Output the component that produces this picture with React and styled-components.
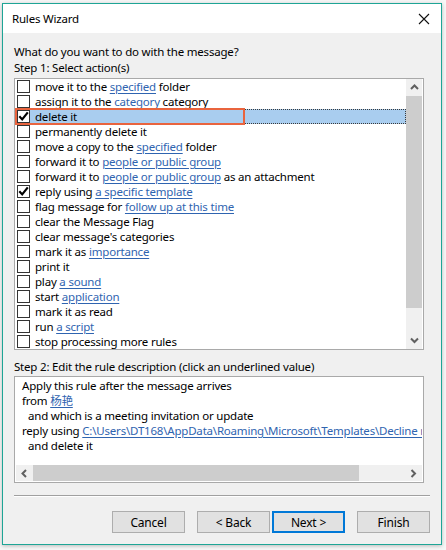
import React from 'react'
import styled, { createGlobalStyle } from 'styled-components'

const GlobalStyle = createGlobalStyle`
  html, body {
    margin: 0;
    padding: 0;
    background: #ffffff;
  }
  body {
    font-family: "Noto Sans", "Noto Sans CJK SC", sans-serif;
    font-size: 11.5px;
    letter-spacing: -0.2px;
    color: #000;
  }
`

const actions = [
  { parts: ['move it to the ', { link: 'specified' }, ' folder'] },
  { parts: ['assign it to the ', { link: 'category' }, ' category'] },
  { parts: ['delete it'], checked: true, selected: true },
  { parts: ['permanently delete it'] },
  { parts: ['move a copy to the ', { link: 'specified' }, ' folder'] },
  { parts: ['forward it to ', { link: 'people or public group' }] },
  { parts: ['forward it to ', { link: 'people or public group' }, ' as an attachment'] },
  { parts: ['reply using ', { link: 'a specific template' }], checked: true },
  { parts: ['flag message for ', { link: 'follow up at this time' }] },
  { parts: ['clear the Message Flag'] },
  { parts: ["clear message's categories"] },
  { parts: ['mark it as ', { link: 'importance' }] },
  { parts: ['print it'] },
  { parts: ['play ', { link: 'a sound' }] },
  { parts: ['start ', { link: 'application' }] },
  { parts: ['mark it as read'] },
  { parts: ['run ', { link: 'a script' }] },
  { parts: ['stop processing more rules'] },
]

const description = [
  { indent: false, parts: ['Apply this rule after the message arrives'] },
  { indent: false, parts: ['from ', { link: '杨艳' }] },
  { indent: true, parts: ['and which is a meeting invitation or update'] },
  {
    indent: false,
    parts: ['reply using ', { link: 'C:\\Users\\DT168\\AppData\\Roaming\\Microsoft\\Templates\\Decline meeting.oft' }],
  },
  { indent: true, parts: ['and delete it'] },
]

const renderParts = (parts) =>
  parts.map((p, i) => (typeof p === 'string' ? <span key={i}>{p}</span> : <Link key={i}>{p.link}</Link>))

const CheckMark = () => (
  <svg width="11" height="11" viewBox="0 0 11 11">
    <path d="M1.3 5.3 L4.2 8.4 L9.8 1.4" fill="none" stroke="#000" strokeWidth="2.2" />
  </svg>
)

const Chevron = ({ dir }) => {
  const paths = {
    up: 'M1 5 L4.5 1.5 L8 5',
    down: 'M1 1.5 L4.5 5 L8 1.5',
    left: 'M5 1 L1.5 4.5 L5 8',
    right: 'M1.5 1 L5 4.5 L1.5 8',
  }
  const vertical = dir === 'up' || dir === 'down'
  return (
    <svg width={vertical ? 9 : 7} height={vertical ? 7 : 9} viewBox={vertical ? '0 0 9 7' : '0 0 7 9'}>
      <path d={paths[dir]} fill="none" stroke="#606060" strokeWidth="2" />
    </svg>
  )
}

const App = () => (
  <>
    <GlobalStyle />
    <Page>
      <Window>
        <TitleBar>
          <Title>Rules Wizard</Title>
          <CloseIcon width="12" height="12" viewBox="0 0 12 12">
            <path d="M1 1 L11 11 M11 1 L1 11" stroke="#111" strokeWidth="1.1" />
          </CloseIcon>
        </TitleBar>
        <Body>
          <Label>What do you want to do with the message?</Label>
          <Label>Step 1: Select action(s)</Label>
          <ListBox>
            <Rows>
              {actions.map((a, i) => (
                <Row key={i} $selected={a.selected}>
                  <Checkbox>{a.checked && <CheckMark />}</Checkbox>
                  <RowText>{renderParts(a.parts)}</RowText>
                  {a.selected && <Callout />}
                </Row>
              ))}
            </Rows>
            <VScroll>
              <ArrowCell>
                <Chevron dir="up" />
              </ArrowCell>
              <VThumb />
              <VTrack />
              <ArrowCell>
                <Chevron dir="down" />
              </ArrowCell>
            </VScroll>
          </ListBox>
          <StepLabel>Step 2: Edit the rule description (click an underlined value)</StepLabel>
          <DescBox>
            <DescLines>
              {description.map((l, i) => (
                <DescLine key={i} $indent={l.indent}>
                  {renderParts(l.parts)}
                </DescLine>
              ))}
            </DescLines>
            <HScroll>
              <HArrowCell>
                <Chevron dir="left" />
              </HArrowCell>
              <HThumb />
              <HTrack />
              <HArrowCell>
                <Chevron dir="right" />
              </HArrowCell>
            </HScroll>
          </DescBox>
          <Separator />
          <Buttons>
            <Button>Cancel</Button>
            <ButtonPair>
              <Button>&lt; Back</Button>
              <Button $default>Next &gt;</Button>
            </ButtonPair>
            <Button>Finish</Button>
          </Buttons>
        </Body>
      </Window>
    </Page>
  </>
)

const Page = styled.div`
  width: 446px;
  height: 550px;
  padding: 3px 0 0 2px;
  box-sizing: border-box;
  background: #f7f7f7;
`

const Window = styled.div`
  width: 440px;
  height: 542px;
  box-sizing: border-box;
  border: 1px solid #1ea596;
  background: #f0f0f0;
  display: flex;
  flex-direction: column;
  box-shadow: 0 1px 4px rgba(0, 0, 0, 0.25);
`

const TitleBar = styled.div`
  height: 29px;
  flex-shrink: 0;
  background: #ffffff;
  display: flex;
  align-items: center;
  justify-content: space-between;
  padding: 0 11px 0 9px;
`

const Title = styled.div`
  font-size: 11.5px;
  color: #000;
`

const CloseIcon = styled.svg`
  display: block;
`

const Body = styled.div`
  flex: 1;
  display: flex;
  flex-direction: column;
  padding: 11px 11px 0 11px;
`

const Label = styled.div`
  height: 16px;
  line-height: 16px;
  white-space: nowrap;
`

const StepLabel = styled(Label)`
  margin-top: 9px;
`

const ListBox = styled.div`
  margin-top: 2px;
  width: 410px;
  height: 272px;
  box-sizing: border-box;
  border: 1px solid #a9a9a9;
  background: #fff;
  display: flex;
  padding: 0 1px 0 0;
`

const Rows = styled.div`
  flex: 1;
  display: flex;
  flex-direction: column;
  min-width: 0;
`

const Row = styled.div`
  position: relative;
  height: 15px;
  display: flex;
  align-items: center;
  padding-left: 2px;
  background: ${(p) => (p.$selected ? '#a9cdef' : 'transparent')};
  outline: ${(p) => (p.$selected ? '1px dotted #3a3a3a' : 'none')};
  outline-offset: -1px;
  white-space: nowrap;
`

const Callout = styled.div`
  position: absolute;
  left: 0;
  top: -1px;
  width: 230px;
  height: 17px;
  box-sizing: border-box;
  border: 2px solid #e9643e;
`

const Checkbox = styled.div`
  width: 13px;
  height: 13px;
  box-sizing: border-box;
  border: 1px solid #333;
  background: #fff;
  display: flex;
  align-items: center;
  justify-content: center;
  flex-shrink: 0;
`

const RowText = styled.div`
  margin-left: 5px;
  line-height: 15px;
`

const Link = styled.span`
  color: #2f64b0;
  text-decoration: underline;
  text-underline-offset: 2px;
`

const VScroll = styled.div`
  width: 16px;
  display: flex;
  flex-direction: column;
  background: #f0f0f0;
`

const ArrowCell = styled.div`
  height: 17px;
  display: flex;
  align-items: center;
  justify-content: center;
`

const VThumb = styled.div`
  height: 212px;
  background: #cdcdcd;
`

const VTrack = styled.div`
  flex: 1;
`

const DescBox = styled.div`
  margin-top: 1px;
  width: 410px;
  height: 107px;
  box-sizing: border-box;
  border: 1px solid #a9a9a9;
  background: #fff;
  display: flex;
  flex-direction: column;
  padding: 0 1px 1px 0;
  overflow: hidden;
`

const DescLines = styled.div`
  flex: 1;
  padding: 1px 0 0 7px;
  overflow: hidden;
`

const DescLine = styled.div`
  height: 15px;
  line-height: 15px;
  white-space: nowrap;
  padding-left: ${(p) => (p.$indent ? '6px' : '0')};
`

const HScroll = styled.div`
  height: 16px;
  display: flex;
  background: #f0f0f0;
  margin-left: 1px;
`

const HArrowCell = styled.div`
  width: 17px;
  display: flex;
  align-items: center;
  justify-content: center;
`

const HThumb = styled.div`
  width: 326px;
  background: #cdcdcd;
`

const HTrack = styled.div`
  flex: 1;
`

const Separator = styled.div`
  margin-top: 12px;
  width: 416px;
  height: 1px;
  background: #a0a0a0;
  border-bottom: 1px solid #fff;
`

const Buttons = styled.div`
  margin-top: 14px;
  width: 416px;
  display: flex;
  justify-content: flex-end;
  gap: 12px;
`

const ButtonPair = styled.div`
  display: flex;
  gap: 2px;
`

const Button = styled.button`
  width: 73px;
  height: 22px;
  box-sizing: border-box;
  font-family: inherit;
  font-size: 12px;
  letter-spacing: inherit;
  color: #000;
  background: #e1e1e1;
  border: ${(p) => (p.$default ? '2px solid #0078d7' : '1px solid #adadad')};
  padding: 0;
  margin: 0;
`

export default App
